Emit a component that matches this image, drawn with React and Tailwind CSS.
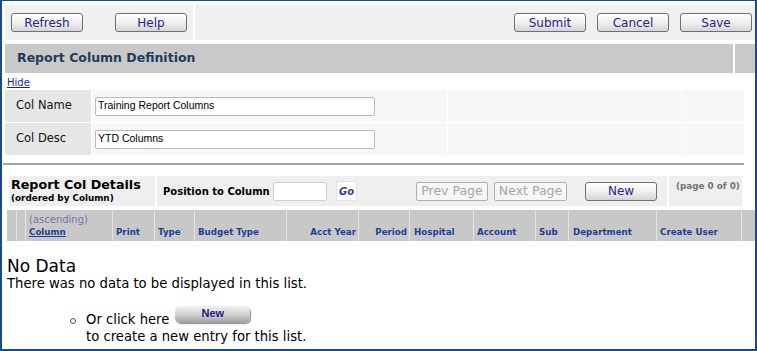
import React from "react";

const headerCols = [
  { w: "w-[10px]", label: "" },
  { w: "w-[9px]", label: "" },
  { w: "w-[87px]", label: "Column", sort: true },
  { w: "w-[42px]", label: "Print" },
  { w: "w-[40px]", label: "Type" },
  { w: "w-[92px]", label: "Budget Type" },
  { w: "w-[72px]", label: "Acct Year", right: true },
  { w: "w-[51px]", label: "Period", right: true },
  { w: "w-[64px]", label: "Hospital", wide: true },
  { w: "w-[62px]", label: "Account" },
  { w: "w-[33px]", label: "Sub" },
  { w: "w-[88px]", label: "Department", wide: true },
  { w: "w-[85px]", label: "Create User" },
  { w: "w-[11px]", label: "", last: true },
];

function ToolButton({ children }) {
  return (
    <button className="w-[72px] h-[19px] shrink-0 border border-[#707070] rounded-[3px] bg-linear-to-b from-white via-[#f0f0f0] to-[#d4d4d4] text-[12px] leading-none text-[#24248c] flex items-center justify-center">
      {children}
    </button>
  );
}

function PageButton({ children, w }) {
  return (
    <div
      className={`${w} h-[19px] shrink-0 border border-[#b0b0b0] rounded-[2px] bg-[#f6f6f6] text-[12.5px] leading-none text-[#a6a6a6] flex items-center justify-center`}
    >
      {children}
    </div>
  );
}

function FormRow({ label, value }) {
  return (
    <div className="flex h-[32px] gap-px">
      <div className="w-[86px] bg-[#e6e6e6] pl-[11px] flex items-center text-[11.5px] text-[#111]">
        {label}
      </div>
      <div className="w-[355px] bg-[#f7f7f7] flex items-center pl-[3px]">
        <div className="w-[280px] h-[19px] bg-white border border-[#b9b9b9] rounded-[2px] pl-[2px] flex items-center font-['Liberation_Sans',sans-serif] text-[10.5px] text-black">
          {value}
        </div>
      </div>
      <div className="w-[233px] bg-[#f7f7f7]"></div>
      <div className="w-[62px] bg-[#f7f7f7]"></div>
    </div>
  );
}

export default function App() {
  return (
    <div className="w-[757px] h-[351px] overflow-hidden bg-white border-[#1c4a86] border-l-2 border-r-2 border-t border-b-2 font-['DejaVu_Sans',sans-serif]">
      <div className="pl-[3px] pt-[4px]">
        {/* toolbar */}
        <div className="flex h-[35px] gap-[2px]">
          <div className="w-[188px] bg-[#f0f0f0] flex items-center justify-between px-[6px]">
            <ToolButton>Refresh</ToolButton>
            <ToolButton>Help</ToolButton>
          </div>
          <div className="flex-1 bg-[#f0f0f0] flex items-center justify-end gap-[11px] pr-[3px]">
            <ToolButton>Submit</ToolButton>
            <ToolButton>Cancel</ToolButton>
            <ToolButton>Save</ToolButton>
          </div>
        </div>

        {/* section title */}
        <div className="flex h-[29px] gap-[2px] mt-[4px]">
          <div className="w-[728px] bg-[#c8c9c8] pl-[12px] flex items-center text-[12.5px] font-bold text-[#1f3b5c]">
            Report Column Definition
          </div>
          <div className="flex-1 bg-[#c8c9c8]"></div>
        </div>

        <div className="h-[17px] pt-[5px] pl-[2px] text-[10px] leading-none">
          <a className="text-[#1a1ab0] underline">Hide</a>
        </div>

        <div className="flex flex-col gap-px">
          <FormRow label="Col Name" value="Training Report Columns" />
          <FormRow label="Col Desc" value="YTD Columns" />
        </div>

        <div className="mt-[8px] -ml-[2px] w-[741px] h-[2px] bg-[#a3a3a3]"></div>

        {/* details header */}
        <div className="flex h-[30px] mt-[11px] ml-[4px] gap-[2px]">
          <div className="w-[146px] bg-[#efefef] pl-[2px] flex flex-col justify-center leading-none font-bold text-black">
            <span className="text-[12.7px]">Report Col Details</span>
            <span className="text-[8.8px] mt-[3px]">(ordered by Column)</span>
          </div>
          <div className="w-[510px] bg-[#efefef] pl-[6px] flex items-center">
            <span className="w-[106px] shrink-0 whitespace-nowrap text-[10px] font-bold text-black">
              Position to Column
            </span>
            <div className="ml-[4px] w-[54px] h-[19px] shrink-0 bg-white border border-[#cfcfcf] rounded-[2px]"></div>
            <div className="ml-[9px] w-[21px] h-[20px] shrink-0 bg-white border border-[#e2e2e2] flex items-center justify-center text-[10px] font-bold italic text-[#2a3aa8]">
              Go
            </div>
            <div className="ml-[59px]">
              <PageButton w="w-[72px]">Prev Page</PageButton>
            </div>
            <div className="ml-[6px]">
              <PageButton w="w-[73px]">Next Page</PageButton>
            </div>
            <div className="ml-[18px]">
              <ToolButton>New</ToolButton>
            </div>
          </div>
          <div className="w-[73px] bg-[#efefef] pl-[7px] pt-[4px] text-[8.8px] font-bold text-[#737373] whitespace-nowrap">
            (page 0 of 0)
          </div>
        </div>

        {/* column headers */}
        <div className="flex h-[31px] mt-[4px] ml-[2px] bg-[#c8c8c8]">
          {headerCols.map((c, i) => (
            <div
              key={i}
              className={`${c.w} shrink-0 h-full flex flex-col justify-end pb-[4px] ${
                c.last ? "" : "border-r border-[#e4e4e4]"
              } ${c.right ? "items-end pr-[2px]" : c.wide ? "pl-[4px]" : "pl-[3px]"}`}
            >
              {c.sort && (
                <span className="text-[10px] leading-none text-[#7873a6] mb-[3px] whitespace-nowrap">
                  (ascending)
                </span>
              )}
              {c.label && (
                <span
                  className={`text-[8.7px] leading-none font-bold text-[#1e3f96] whitespace-nowrap ${
                    c.sort ? "underline" : ""
                  }`}
                >
                  {c.label}
                </span>
              )}
            </div>
          ))}
        </div>

        {/* empty state */}
        <div className="ml-[2px] mt-[17px] text-[17px] leading-none text-black">No Data</div>
        <div className="ml-[2px] mt-[2px] text-[13.2px] leading-none text-black">
          There was no data to be displayed in this list.
        </div>

        <div className="ml-[65px] mt-[16px] flex items-start">
          <span className="mt-[12px] w-[6px] h-[6px] shrink-0 rounded-full border border-[#6b5320]"></span>
          <div className="ml-[10px] flex flex-col">
            <div className="flex items-end">
              <span className="text-[13.2px] leading-none text-black">Or click here</span>
              <div className="ml-[6px] mb-[3px] w-[75px] h-[17px] rounded-[5px] bg-linear-to-b from-[#f2f2f2] via-[#d2d2d2] to-[#9e9e9e] shadow-[1px_1px_1px_rgba(0,0,0,0.45)] flex justify-center pt-[2px] font-['Liberation_Sans',sans-serif] text-[11px] font-bold leading-none text-[#1a1a80]">
                New
              </div>
            </div>
            <span className="mt-[4px] text-[13.2px] leading-none text-black">
              to create a new entry for this list.
            </span>
          </div>
        </div>
      </div>
    </div>
  );
}
